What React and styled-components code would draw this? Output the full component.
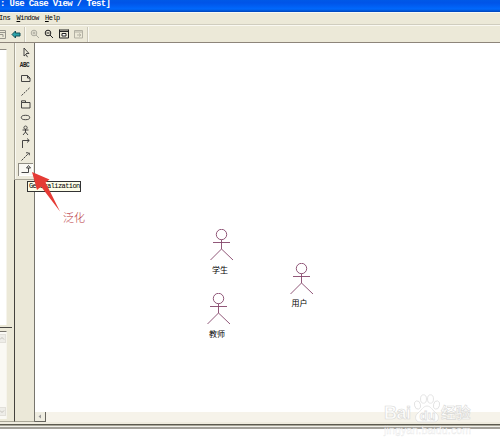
import React from "react";
import styled, { createGlobalStyle } from "styled-components";

const Global = createGlobalStyle`
  * { box-sizing: border-box; }
  body { margin: 0; background: #fff; overflow: hidden; }
`;
const mono = `"Liberation Mono", monospace`;

const Window = styled.div`
  width: 500px; height: 447px; display: flex; flex-direction: column;
  background: #fff; font-family: ${mono}; position: relative; overflow: hidden;
`;
const TitleBar = styled.header`
  height: 12px; flex: none; padding-left: 0;
  background: linear-gradient(#0058e6 0, #0054e8 25%, #0068fc 75%, #005fe8 83%, #0043b8 100%);
  color: #fff; font: bold 9px/8px ${mono}; letter-spacing: -0.6px; white-space: pre;
`;
const MenuBar = styled.nav`
  height: 13px; flex: none; display: flex; gap: 7px;
  background: #ece9d8; border-top: 1px solid #f8f8f4; border-bottom: 1px solid #d0cdbf;
  font: 7px/11px ${mono}; color: #000; letter-spacing: -0.5px;
`;
const MenuItem = styled.span`
  width: ${(p) => p.$w}px; white-space: nowrap; text-indent: ${(p) => p.$indent || 0}px;
`;
const Key = styled.u`text-decoration-thickness: 1px; text-underline-offset: 1px;`;
const ToolBar = styled.div`
  height: 18px; flex: none; border-top: 1px solid #faf9f2;
  border-bottom: 1px solid #8d857a; background: #ece9d8; display: flex; align-items: center;
`;
const Tool = styled.span`
  width: ${(p) => p.$w || 14.5}px; display: flex; justify-content: center;
  svg { display: block; fill: none; stroke: ${(p) => p.$color || "#222"}; }
`;
const Divider = styled.i`
  width: 2px; height: 15px; border-left: 1px solid #cbc8b9; border-right: 1px solid #faf9f2;
`;
const Body = styled.main`height: 379px; flex: none; display: flex;`;
const LeftDock = styled.aside`
  width: 14px; flex: none; background: #ece9d8; border-bottom: 1px solid #aaa798;
  display: flex; flex-direction: column;
`;
const TreePane = styled.div`
  width: 7px; height: 276px; flex: none; margin-top: 6px; background: #fff;
  border-top: 1px solid #8f8c82; border-right: 1px solid #f6f4ec;
`;
const DockSplit = styled.div`
  width: 12px; height: 3px; flex: none; border-bottom: 1px solid #4a4843; margin-bottom: 3px;
`;
const DocPane = styled.div`
  width: 7px; height: 88px; background: #faf9f4; border-top: 1px solid #77746c;
  border-right: 1px solid #f6f4ec;
  display: flex; flex-direction: column; justify-content: space-between; padding: 2px 0 3px;
`;
const PaneArrow = styled.span`
  width: 6px; height: 9px; background: #eeede8; border: 1px solid #e2e0da; border-left: 0;
  svg { display: block; fill: none; stroke: #c3c1ba; }
`;
const PaletteColumn = styled.div`
  width: 21px; flex: none; display: flex; flex-direction: column; background: #ebe8d8;
  border-right: 1px solid #77756e;
`;
const Palette = styled.div`
  height: 137px; flex: none; padding: 2.5px 3px 0; background: #edeadb;
  border-left: 1px solid #aaa798; border-bottom: 1px solid #aaa798;
  box-shadow: inset 1px 0 #faf9f2;
`;
const PaletteRest = styled.div`
  flex: 1; border-left: 1px solid #44423d; border-bottom: 1px solid #aaa798;
`;
const PaletteButton = styled.div`
  width: 15px; height: 13.1px; padding-left: 1px;
  background: ${(p) => (p.$on ? "#f9f8f3" : "transparent")};
  box-shadow: ${(p) => (p.$on ? "inset 1px 1px #8f8c82, inset -1px -1px #fff" : "none")};
  svg { display: block; fill: none; stroke: #333; }
`;
const Letters = styled.b`
  display: block; width: 13px; margin-left: -1px; font: bold 6px/13px "Liberation Mono", monospace;
  letter-spacing: -0.5px; color: #222; text-align: center; white-space: nowrap;
  transform: scaleY(1.2);
`;
const Canvas = styled.section`
  flex: 1; background: #fff; display: flex; flex-direction: column; justify-content: flex-end;
  position: relative;
`;
const ScrollTrack = styled.div`height: 10px; background: #f6f3ea; display: flex;`;
const ScrollButton = styled.div`
  width: 11px; height: 10px; background: #efede1; border: solid #66645e; border-width: 0 1px 1px 0;
  svg { display: block; fill: #999; }
`;
const Frame = styled.footer`
  height: 7px; flex: none; display: flex; flex-direction: column; justify-content: flex-end;
  background: #efecdf;
`;
const FrameLine = styled.i`flex: none; height: ${(p) => p.$h}px; background: ${(p) => p.$color};`;
const Actor = styled.figure`
  position: absolute; margin: 0; left: ${(p) => p.$x}px; top: ${(p) => p.$y}px; width: 26px;
`;
const ActorName = styled.figcaption`
  position: absolute; top: ${(p) => p.$top}px; left: 3px; white-space: nowrap;
  font: 8px/12px "Noto Sans CJK SC", sans-serif; color: #000;
`;
const Tooltip = styled.div`
  position: absolute; left: 27px; top: 181px; width: 54px; height: 11px; padding-left: 1px;
  border: 1px solid #333; background: #fdfde8; white-space: nowrap;
  font: 7px/9px ${mono}; letter-spacing: -0.58px; color: #000;
`;
const Pointer = styled.svg`position: absolute; left: 30px; top: 170px; fill: #e53b35;`;
const Note = styled.span`
  position: absolute; left: 63px; top: 209px; font: 300 11px/16px "Noto Sans CJK SC", sans-serif;
  color: #b8343c;
`;
const Watermark = styled.div`
  position: absolute; left: 384px; top: 392px; width: 92px; height: 46px;
  color: rgba(255, 255, 255, 0.85);
`;
const MarkRow = styled.div`
  height: 31px; display: flex; align-items: flex-end;
  svg { display: block; fill: rgba(255,255,255,.85); stroke: #dedede; stroke-width: .8; }
`;
const MarkText = styled.span`
  width: ${(p) => p.$w}px; flex: none; white-space: nowrap;
  font: bold ${(p) => p.$size}px/20px "Liberation Sans", "Noto Sans CJK SC", sans-serif;
  letter-spacing: -0.5px; -webkit-text-stroke: 0.6px #d8d8d6;
`;
const MarkUrl = styled.div`
  margin-top: 1px; font: 10.5px/13px "Liberation Sans", sans-serif; letter-spacing: .15px;
  -webkit-text-stroke: 0.4px rgba(220, 220, 220, 0.65);
`;

function Person({ x, y, name, labelTop = 35 }) {
  return (
    <Actor $x={x} $y={y}>
      <svg width="26" height="34" fill="none" stroke="#84456a" strokeWidth=".9">
        <circle cx="12.5" cy="5.5" r="5.2" />
        <path d="M12.5 10.7V20M4 13.5H21M12.5 20L1.5 31M12.5 20L24 31" />
      </svg>
      <ActorName $top={labelTop}>{name}</ActorName>
    </Actor>
  );
}

const glyphs = [
  <path d="M5 2V10L7 8.3L8.5 11.2M5 2L10 7.5H7" />,
  null,
  <path d="M2.5 3.5H8.5L11 6V9.5H2.5ZM8.5 3.5V6H11" />,
  <path d="M2.5 10.5L11 2.5" strokeDasharray="2 1" />,
  <path d="M2.5 4.5V10H11V4.5ZM2.5 4.5V2.8H6.5V4.5" />,
  <ellipse cx="6.5" cy="6.5" rx="4.2" ry="2.2" />,
  <path d="M6.5 2A1.6 1.6 0 1 0 6.6 2M6.5 5V8M3.5 6H9.5M6.5 8L4 11M6.5 8L9 11" />,
  <path d="M3.5 11V3.5H10M8 1.5L10.3 3.5L8 5.5" />,
  <path d="M2.5 10.5L10 3M7 2.8H10.3V6" strokeDasharray="2.5 .7" />,
  <path d="M2.5 9.5H9.5V5M7.5 5L9.5 2.5L11.5 5Z" />,
];

export default function App() {
  return (
    <Window>
      <Global />
      <TitleBar>: Use Case View / Test]</TitleBar>
      <MenuBar>
        <MenuItem $w={9.5} $indent={-1}>Ins</MenuItem>
        <MenuItem $w={21.5}><Key>W</Key>indow</MenuItem>
        <MenuItem $w={20}><Key>H</Key>elp</MenuItem>
      </MenuBar>
      <ToolBar>
        <Tool $w={8} $color="#96958c">
          <svg width="8" height="11"><path d="M0 1.5H5.5V9.5H0M0 3.5H5M0 5.5H3V8" /></svg>
        </Tool>
        <Tool $w={16} $color="#174f57">
          <svg width="10" height="9"><path fill="#2ba4aa" d="M1 4.5L4.5 1V3H9V6H4.5V8Z" /></svg>
        </Tool>
        <Divider />
        <Tool $w={17} $color="#aaa99e">
          <svg width="10" height="10"><circle cx="4" cy="4" r="2.8" /><path d="M6 6L9 9M2.5 4H5.5M4 2.5V5.5" /></svg>
        </Tool>
        <Tool $w={12}>
          <svg width="10" height="10"><circle cx="4" cy="4" r="2.8" /><path d="M6 6L9 9M2.5 4H5.5" /></svg>
        </Tool>
        <Tool $w={17}>
          <svg width="10" height="10"><path d="M.5 1H9.5M.5 .5V9H9.5V.5M.5 2.5H9.5" /><path fill="#fff" d="M3 4.5H7V7H3Z" /></svg>
        </Tool>
        <Tool $w={13} $color="#b3b1a4">
          <svg width="10" height="10"><path d="M.5 1.5H8.5V9H.5ZM.5 3H8.5M3 6H6M5 4.5L7 6L5 7.5" /></svg>
        </Tool>
        <Tool $w={2} />
        <Divider />
      </ToolBar>
      <Body>
        <LeftDock>
          <TreePane />
          <DockSplit />
          <DocPane>
            <PaneArrow><svg width="5" height="7"><path d="M0 4.5L2 2.5L4 4.5" /></svg></PaneArrow>
            <PaneArrow><svg width="5" height="7"><path d="M0 2.5L2 4.5L4 2.5" /></svg></PaneArrow>
          </DocPane>
        </LeftDock>
        <PaletteColumn>
          <Palette>
            {glyphs.map((g, i) => (
              <PaletteButton key={i} $on={i === 9}>
                {g ? <svg width="13" height="13" strokeWidth=".9">{g}</svg> : <Letters>ABC</Letters>}
              </PaletteButton>
            ))}
          </Palette>
          <PaletteRest />
        </PaletteColumn>
        <Canvas>
          <Person x={174} y={186} name="学生" />
          <Person x={253.5} y={220} name="用户" labelTop={34} />
          <Person x={171} y={250} name="教师" />
          <ScrollTrack>
            <ScrollButton><svg width="10" height="9"><path d="M6 2.5V6.5L3.5 4.5Z" /></svg></ScrollButton>
          </ScrollTrack>
        </Canvas>
      </Body>
      <Frame>
        <FrameLine $h={1} $color="#5c5a50" />
        <FrameLine $h={1} $color="#a9a799" />
        <FrameLine $h={1} $color="#f1f0ea" />
        <FrameLine $h={2} $color="#a3a19a" />
      </Frame>
      <Tooltip>Generalization</Tooltip>
      <Pointer width="32" height="44"><path d="M2 2L19.5 9.5L15.5 12.5L30 41.5L11 16.5L7 20Z" /></Pointer>
      <Note>泛化</Note>
      <Watermark>
        <MarkRow>
          <MarkText $w={29} $size={18}>Bai</MarkText>
          <svg width="28" height="29">
            <ellipse cx="4.5" cy="11" rx="3" ry="4.2" transform="rotate(-15 4.5 11)" />
            <ellipse cx="10.5" cy="5" rx="3" ry="4.2" />
            <ellipse cx="17.5" cy="5" rx="3" ry="4.2" />
            <ellipse cx="23.5" cy="11" rx="3" ry="4.2" transform="rotate(15 23.5 11)" />
            <path d="M14 12C10 12 8 17 5 19C1 22 2 28 7 28H21C26 28 27 22 23 19C20 17 18 12 14 12Z" />
            <text x="6.5" y="26" fontFamily="Liberation Sans" fontSize="13" fontWeight="bold">du</text>
          </svg>
          <MarkText $w={32} $size={15}>经验</MarkText>
        </MarkRow>
        <MarkUrl>jingyan.baidu.com</MarkUrl>
      </Watermark>
    </Window>
  );
}
